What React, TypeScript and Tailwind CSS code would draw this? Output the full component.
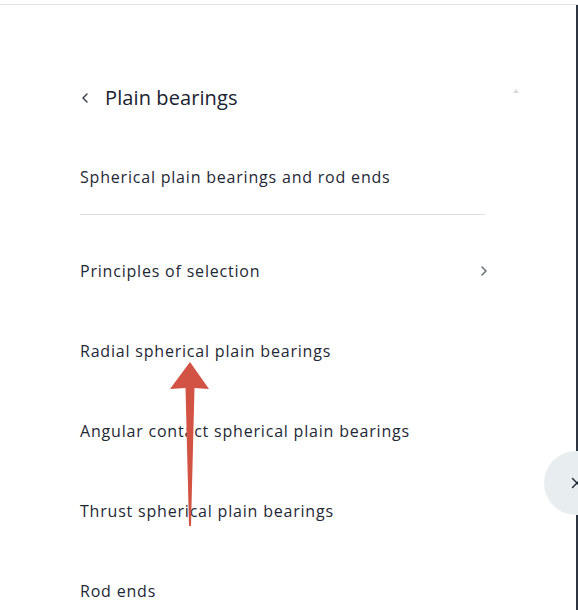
import { ChevronLeft, ChevronRight, X } from 'lucide-react';

const items = [
  { label: 'Principles of selection', more: true },
  { label: 'Radial spherical plain bearings', more: false },
  { label: 'Angular contact spherical plain bearings', more: false },
  { label: 'Thrust spherical plain bearings', more: false },
  { label: 'Rod ends', more: false },
];

export default function App() {
  return (
    <div
      className="relative w-[578px] h-[610px] bg-white overflow-hidden text-[#1e2835]"
      style={{ fontFamily: '"Open Sans", "Noto Sans", sans-serif' }}
    >
      <div className="h-[4px]" />
      <div className="flex h-[606px] border-t border-[#e2e4e7]">
        <div className="flex-1 pl-[80px] pr-[91px]">
          {/* header */}
          <div className="mt-[73px] flex items-center h-[40px]">
            <ChevronLeft className="w-[16px] h-[16px] -ml-[3px] text-[#3a4350]" strokeWidth={2.2} />
            <span className="ml-[12px] text-[20px] leading-[28px] tracking-[0.1px] text-[#1a2330]">Plain bearings</span>
          </div>

          <div className="mt-[47px] text-[16px] leading-[24px] tracking-[0.8px]">Spherical plain bearings and rod ends</div>
          <div className="mt-[25px] border-t border-[#dcdee1]" />

          <ul className="mt-[16px]">
            {items.map((it) => (
              <li key={it.label} className="h-[80px] flex items-center justify-between text-[16px] leading-[24px] tracking-[0.8px]">
                <span>{it.label}</span>
                {it.more && <ChevronRight className="w-[16px] h-[16px] -mr-[7px] text-[#6b737d]" strokeWidth={2.4} />}
              </li>
            ))}
          </ul>
        </div>
        <div className="w-[2px] bg-[#2e3641]" />
      </div>

      {/* scrollbar up arrow */}
      <svg className="absolute left-[512px] top-[88px]" width="8" height="6" viewBox="0 0 8 6">
        <path d="M4 1 L7 5 L1 5 Z" fill="#d9dbde" />
      </svg>

      {/* close button */}
      <button className="absolute left-[544px] top-[451px] w-[64px] h-[64px] rounded-full bg-[#e8eef0] flex items-center pl-[24px]">
        <X className="w-[18px] h-[18px] text-[#1a2330]" strokeWidth={1.8} />
      </button>

      {/* annotation arrow */}
      <svg className="absolute left-0 top-0 pointer-events-none" width="578" height="610" viewBox="0 0 578 610">
        <path d="M190 362 L209 389 L194.5 388 L191 526 L189 526 L185.5 388 L170 389 Z" fill="#d25343" />
      </svg>
    </div>
  );
}
